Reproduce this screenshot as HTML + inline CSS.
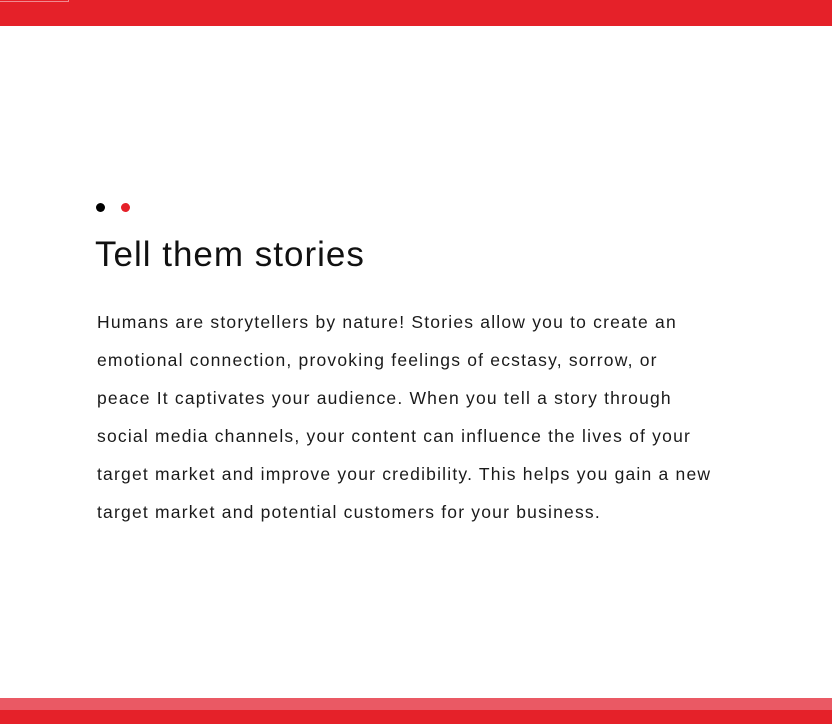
<!DOCTYPE html>
<html><head><style>
html,body{margin:0;padding:0;width:832px;height:724px;overflow:hidden;background:#fff;font-family:"Liberation Sans",sans-serif;}
.top{position:absolute;left:0;top:0;width:832px;height:26px;background:#e52129;}
.tb{position:absolute;left:0;top:0;width:68px;height:1px;border:1px solid #f08a90;border-top:none;border-left:none;}
.b1{position:absolute;left:0;top:698px;width:832px;height:12px;background:#ea5964;}
.b2{position:absolute;left:0;top:710px;width:832px;height:14px;background:#e52129;}
.d{position:absolute;width:9px;height:9px;border-radius:50%;top:203px;}
h1{position:absolute;left:95px;top:232px;margin:0;font-weight:normal;font-size:35px;line-height:46px;color:#111;letter-spacing:1px;}
.p{position:absolute;left:97px;top:303px;font-size:17.5px;line-height:38px;color:#1a1a1a;white-space:nowrap;letter-spacing:1.2px;}
</style></head><body>
<div class="top"></div><div class="tb"></div>
<div class="d" style="left:96px;background:#000"></div>
<div class="d" style="left:121px;background:#e52129"></div>
<h1>Tell them stories</h1>
<div class="p">Humans are storytellers by nature! Stories allow you to create an<br>emotional connection, provoking feelings of ecstasy, sorrow, or<br>peace It captivates your audience. When you tell a story through<br>social media channels, your content can influence the lives of your<br>target market and improve your credibility. This helps you gain a new<br>target market and potential customers for your business.</div>
<div class="b1"></div><div class="b2"></div>
</body></html>
